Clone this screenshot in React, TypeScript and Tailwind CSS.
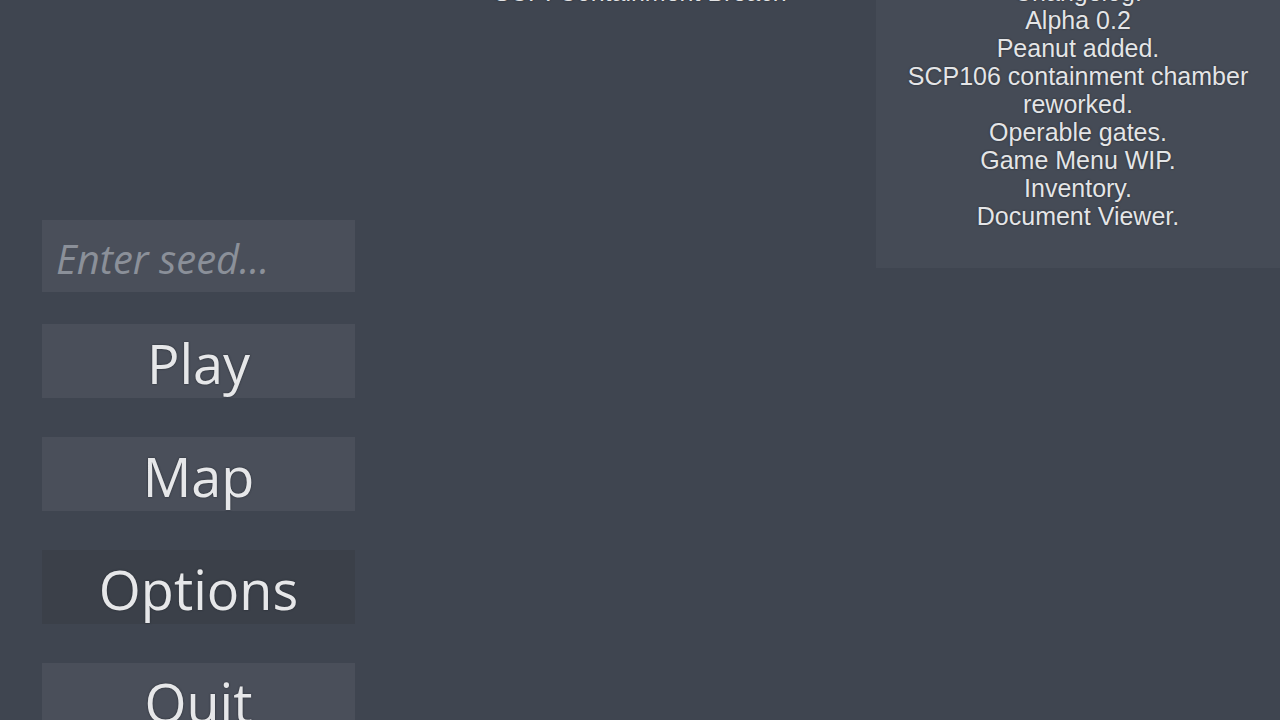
import { useState } from "react";

const changelog = [
  "Changelog:",
  "Alpha 0.2",
  "Peanut added.",
  "SCP106 containment chamber reworked.",
  "Operable gates.",
  "Game Menu WIP.",
  "Inventory.",
  "Document Viewer.",
];

function MenuButton({ label, hovered = false }: { label: string; hovered?: boolean }) {
  return (
    <button
      className={`flex h-[74px] w-full shrink-0 items-center justify-center pt-[4px] text-[54px] leading-none text-[#e6e7e9] [text-shadow:0_0_2px_#22262d] ${
        hovered ? "bg-[#3b4049]" : "bg-[#4a4f5a]"
      }`}
    >
      {label}
    </button>
  );
}

export default function App() {
  const [seed, setSeed] = useState("");

  return (
    <div className="flex h-[720px] w-full overflow-hidden bg-[#3f4550] font-['Open_Sans',sans-serif]">
      {/* main menu */}
      <div className="flex w-[355px] shrink-0 flex-col pt-[220px] pl-[42px]">
        <input
          value={seed}
          onChange={e => setSeed(e.target.value)}
          placeholder="Enter seed..."
          className="h-[72px] w-full shrink-0 bg-[#4a4f5a] px-[14px] pt-[4px] text-[40px] italic text-[#e6e7e9] outline-none placeholder:text-[#8b9099]"
        />
        <div className="mt-[32px] flex shrink-0 flex-col gap-[39px]">
          <MenuButton label="Play" />
          <MenuButton label="Map" />
          <MenuButton label="Options" hovered />
          <MenuButton label="Quit" />
        </div>
      </div>

      {/* title, scrolled mostly out of view */}
      <div className="flex flex-1 justify-center pl-[49px]">
        <h1 className="mt-[-22px] font-['Liberation_Sans',Arial,sans-serif] text-[25px] leading-[28px] text-[#e2e3e5] [text-shadow:0_0_2px_#22262d]">
          SCP: Containment Breach
        </h1>
      </div>

      {/* changelog */}
      <div className="mt-[-22px] w-[404px] shrink-0 self-start bg-[#454b56] px-[14px] pb-[38px] text-center font-['Liberation_Sans',Arial,sans-serif] text-[25px] leading-[28px] text-[#e4e5e7] [text-shadow:0_0_2px_#22262d]">
        {changelog.map(line => (
          <p key={line}>{line}</p>
        ))}
      </div>
    </div>
  );
}
